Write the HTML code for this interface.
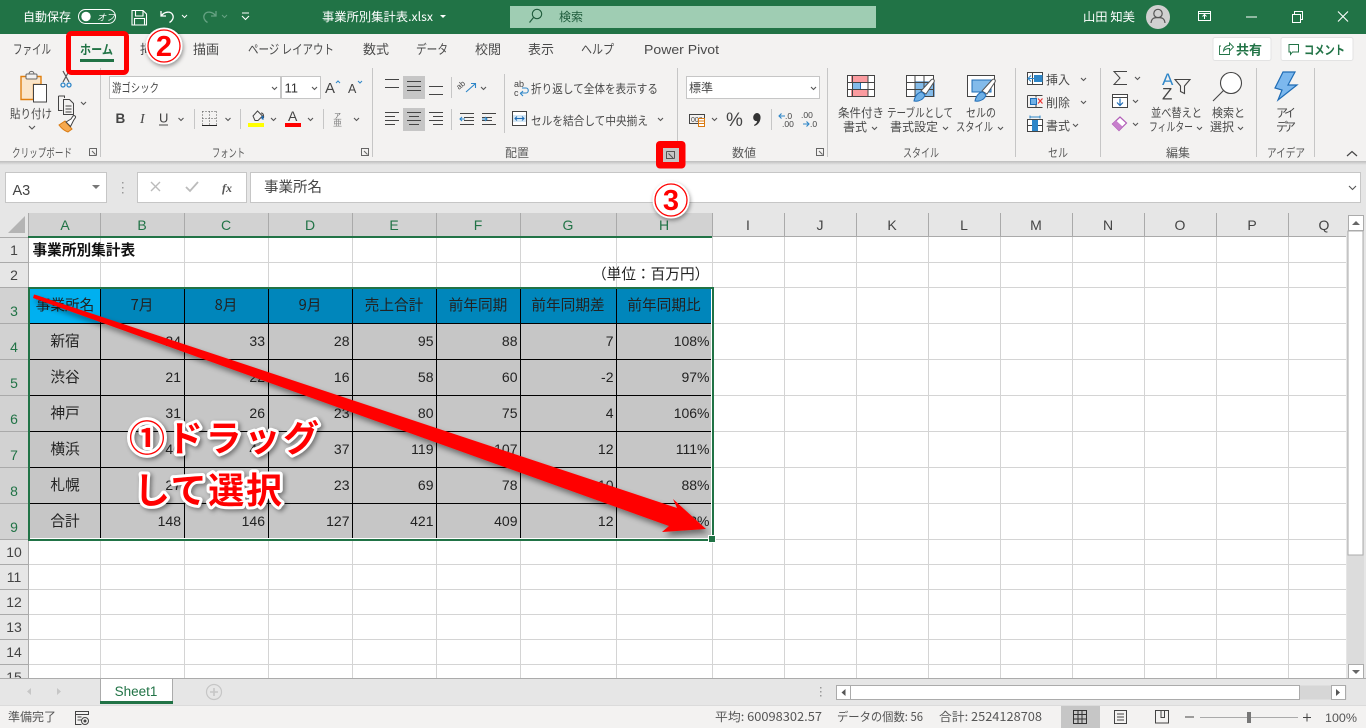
<!DOCTYPE html>
<html lang="ja"><head><meta charset="utf-8"><title>事業所別集計表.xlsx - Excel</title>
<style>
html,body{margin:0;padding:0;width:1366px;height:728px;overflow:hidden;background:#fff}
svg{display:block}
text{font-family:"Liberation Sans","Noto Sans CJK JP",sans-serif}
.j{font-family:"Noto Sans CJK JP","Liberation Sans",sans-serif}
.r{font-size:12px;fill:#4a4a4a;font-family:"Noto Sans CJK JP",sans-serif}
.t{font-size:13px;fill:#4a4a4a;font-family:"Noto Sans CJK JP",sans-serif}
.w{font-size:12px;fill:#fff;font-family:"Noto Sans CJK JP",sans-serif}
.g{font-size:12px;fill:#5a5a5a;font-family:"Noto Sans CJK JP",sans-serif}
.c{font-size:14px;fill:#222;text-anchor:end}
.m{font-size:14.67px;fill:#222;text-anchor:middle;font-family:"Noto Sans CJK JP",sans-serif}
.h{font-size:14px;fill:#444;text-anchor:middle}
.s{fill:#217346}
.i{fill:none;stroke:#444;stroke-width:1}
.ch{fill:none;stroke:#555;stroke-width:1.1}
.big{font-size:36px;font-weight:700;fill:#f00;stroke:#fff;stroke-width:6px;paint-order:stroke;stroke-linejoin:round;font-family:"Noto Sans CJK JP",sans-serif;filter:drop-shadow(2px 2px 2px rgba(0,0,0,.4))}
.num{font-size:29px;font-weight:700;fill:#f00;text-anchor:middle;font-family:"Liberation Sans",sans-serif}
</style></head><body>
<svg width="1366" height="728" viewBox="0 0 1366 728" xmlns="http://www.w3.org/2000/svg">
<defs>
<filter id="sh" x="-10%" y="-10%" width="120%" height="130%"><feDropShadow dx="3" dy="4" stdDeviation="3" flood-color="#000" flood-opacity=".45"/></filter>
<filter id="cs" x="-30%" y="-30%" width="160%" height="160%"><feDropShadow dx="1" dy="2" stdDeviation="2" flood-color="#000" flood-opacity=".4"/></filter>
<linearGradient id="rs" x1="0" y1="0" x2="0" y2="1"><stop offset="0" stop-color="#bdbdbd"/><stop offset="1" stop-color="#e6e6e6"/></linearGradient>
</defs>

<!-- backgrounds -->
<rect width="1366" height="34" fill="#217346"/>
<rect y="34" width="1366" height="127" fill="#f3f2f1"/>
<rect y="161" width="1366" height="52" fill="#e6e6e6"/>
<rect y="161" width="1366" height="4" fill="url(#rs)"/>

<!-- title bar -->
<text class="w" x="23" y="21" textLength="48" lengthAdjust="spacingAndGlyphs">自動保存</text>
<rect x="78.5" y="9.5" width="37" height="14" rx="7" fill="none" stroke="#fff"/>
<circle cx="86" cy="16.5" r="4.7" fill="#fff"/>
<text class="w" x="97" y="20.5" style="font-size:9px;font-style:italic">オフ</text>
<path d="M132 10.5h11l3.500 3.500v11h-14.500zM135.500 10.500v5.500h7.500v-5.500M134.500 25v-6.500h10v6.500" fill="none" stroke="#fff" stroke-width="1.100"/>
<path d="M161 11v5h5M161.500 15.500c3-4 9-4.500 11-1 1.800 3-.3 6.500-3 8" fill="none" stroke="#fff" stroke-width="1.300"/>
<path d="M182 15l2.500 2.500 2.500-2.500" fill="none" stroke="#fff"/>
<path d="M216 11v5h-5M215.500 15.500c-3-4-9-4.500-11-1-1.800 3 .3 6.500 3 8" fill="none" stroke="#66a283" stroke-width="1.300"/>
<path d="M222 15l2.500 2.500 2.500-2.500" fill="none" stroke="#66a283"/>
<path d="M242 13h7M242 16l3.500 3.500 3.500-3.500" fill="none" stroke="#fff" stroke-width="1.100"/>
<text class="w" x="322" y="21" textLength="111" lengthAdjust="spacingAndGlyphs">事業所別集計表.xlsx</text>
<path d="M440 15h6l-3 3z" fill="#fff"/>
<rect x="510" y="6" width="366" height="22" fill="#9fcdb3"/>
<circle cx="537" cy="14" r="4.700" fill="none" stroke="#1f5c3c" stroke-width="1.100"/>
<path d="M533.500 17.500l-4 5" stroke="#1f5c3c" stroke-width="1.200"/>
<text x="559" y="21" class="j" style="font-size:12px;fill:#1f5c3c">検索</text>
<text class="w" x="1083" y="21" textLength="52" lengthAdjust="spacingAndGlyphs">山田 知美</text>
<circle cx="1158" cy="17" r="12" fill="#d0d0d0"/>
<circle cx="1158" cy="13.500" r="4.200" fill="none" stroke="#555" stroke-width="1.200"/>
<path d="M1151 23c.5-5 3.500-5.500 7-5.500s6.500.5 7 5.500" fill="none" stroke="#555" stroke-width="1.200"/>
<path d="M1198.500 11.500h12v9h-12zM1198.500 13.500h12M1204.500 19v-4M1202.500 16.500l2-2 2 2" fill="none" stroke="#fff"/>
<rect x="1246" y="16.500" width="11" height="1" fill="#fff"/>
<path d="M1292.500 14.500h8v8h-8zM1294.500 14v-2.500h8v8h-2" fill="none" stroke="#fff"/>
<path d="M1338 11.500l10 10M1348 11.500l-10 10" stroke="#fff" stroke-width="1.100"/>

<!-- tabs -->
<text class="t" x="13" y="54" textLength="38" lengthAdjust="spacingAndGlyphs">ファイル</text>
<text class="s j" x="80" y="54" style="font-size:12.500px;font-weight:700" textLength="33" lengthAdjust="spacingAndGlyphs">ホーム</text>
<rect x="80" y="59" width="34" height="3" fill="#217346"/>
<text class="t" x="140" y="54">挿入</text>
<text class="t" x="193" y="54">描画</text>
<text class="t" x="248" y="54" textLength="86" lengthAdjust="spacingAndGlyphs">ページ レイアウト</text>
<text class="t" x="363" y="54">数式</text>
<text class="t" x="416" y="54" textLength="32" lengthAdjust="spacingAndGlyphs">データ</text>
<text class="t" x="475" y="54">校閲</text>
<text class="t" x="528" y="54">表示</text>
<text class="t" x="581" y="54" textLength="33" lengthAdjust="spacingAndGlyphs">ヘルプ</text>
<text x="644" y="54" style="font-size:12.500px;fill:#4a4a4a" textLength="75" lengthAdjust="spacingAndGlyphs">Power Pivot</text>
<rect x="1213" y="37.500" width="58" height="23" rx="2" fill="#fff" stroke="#e3e3e3"/>
<path d="M1221 46h-1.500v8.500h10v-3M1223.500 51c.5-4 3-5.500 6-5.500v-2.500l4 4-4 4v-2.500c-2.500 0-4.500 .5-6 2.500z" fill="none" stroke="#217346" stroke-width=".9"/>
<text class="s j" x="1236" y="54.500" style="font-size:13px;font-weight:700">共有</text>
<rect x="1281" y="37.500" width="72" height="23" rx="2" fill="#fff" stroke="#e3e3e3"/>
<path d="M1289 44.500h9.500v7.500h-6l-2 2.500v-2.500h-1.500z" fill="none" stroke="#217346"/>
<text class="s j" x="1304" y="54.500" style="font-size:12.500px;font-weight:700" textLength="41" lengthAdjust="spacingAndGlyphs">コメント</text>

<!-- group separators -->
<g fill="#c6c6c6">
<rect x="100" y="68" width="1" height="89"/><rect x="372" y="68" width="1" height="89"/><rect x="677" y="68" width="1" height="89"/><rect x="827" y="68" width="1" height="89"/><rect x="1015" y="68" width="1" height="89"/><rect x="1100" y="68" width="1" height="89"/><rect x="1256" y="68" width="1" height="89"/><rect x="1314" y="68" width="1" height="89"/>
<rect x="194" y="109" width="1" height="20"/><rect x="240" y="109" width="1" height="20"/><rect x="323" y="109" width="1" height="20"/>
<rect x="451" y="77" width="1" height="21"/><rect x="451" y="109" width="1" height="21"/><rect x="504" y="74" width="1" height="59"/><rect x="771" y="109" width="1" height="21"/>
</g>
<!-- group labels -->
<text class="g" x="12" y="157" textLength="60" lengthAdjust="spacingAndGlyphs">クリップボード</text>
<text class="g" x="212" y="157" textLength="33" lengthAdjust="spacingAndGlyphs">フォント</text>
<text class="g" x="505" y="157">配置</text>
<text class="g" x="732" y="157">数値</text>
<text class="g" x="903" y="157" textLength="36" lengthAdjust="spacingAndGlyphs">スタイル</text>
<text class="g" x="1048" y="157" textLength="20" lengthAdjust="spacingAndGlyphs">セル</text>
<text class="g" x="1166" y="157">編集</text>
<text class="g" x="1267" y="157" textLength="38" lengthAdjust="spacingAndGlyphs">アイデア</text>
<g class="i" style="stroke:#666"><path d="M89.500 148.500h7v7M89.500 148.500v7h7M92 151l3.500 3.500"/><path d="M361.500 148.500h7v7h-7zM364 151l3.500 3.500"/><path d="M816.500 148.500h7v7h-7zM819 151l3.500 3.500"/></g>
<path d="M1347 156l5-4.500 5 4.500" fill="none" stroke="#444" stroke-width="1.200"/>

<!-- clipboard group -->
<path d="M21 76.500h20v8h-7.500v15H21z" fill="#fbe5c8" stroke="#e07f0f" stroke-width="1.400"/>
<rect x="26" y="74" width="11" height="5" rx="1" fill="#f3f2f1" stroke="#666"/>
<path d="M29 74c0-3.500 5-3.500 5 0" fill="none" stroke="#666"/>
<rect x="33.500" y="84.500" width="13" height="17.500" fill="#fff" stroke="#444"/>
<text class="r" x="10" y="118" textLength="42" lengthAdjust="spacingAndGlyphs">貼り付け</text>
<path class="ch" d="M29 126l3 3 3-3"/>
<path d="M63 71l6 11M69 71l-6 11" stroke="#555" stroke-width="1.200"/>
<circle cx="63" cy="85" r="2" fill="none" stroke="#2e86c8" stroke-width="1.300"/><circle cx="69" cy="85" r="2" fill="none" stroke="#2e86c8" stroke-width="1.300"/>
<path d="M58.500 96h6v2M58.500 96v14.500h4M63.500 99.500h6l4 4v11h-10zM65.500 106h6M65.500 109h6M65.500 112h6" fill="none" stroke="#444"/>
<path class="ch" d="M81 102l2.500 2.500 2.500-2.500"/>
<path d="M59 125l6-4 7 8-4 3c-3-1-6-3-9-7z" fill="#f5a94f" stroke="#d97a11"/>
<path d="M66 122l5-3 2-3c1-1 3 0 2.500 1.500l-2 3-3 6z" fill="#fff" stroke="#444"/>

<!-- font group -->
<rect x="109.500" y="76.500" width="171" height="22" fill="#fff" stroke="#c6c6c6"/>
<rect x="281.500" y="76.500" width="39" height="22" fill="#fff" stroke="#c6c6c6"/>
<text class="r" x="112" y="92" textLength="47" lengthAdjust="spacingAndGlyphs">游ゴシック</text>
<path class="ch" d="M272 87l2.500 2.500 2.500-2.500M312 87l2.500 2.500 2.500-2.500"/>
<text x="284.500" y="92.500" style="font-size:13px;fill:#333">11</text>
<text x="325" y="93" style="font-size:15px;fill:#444">A</text>
<path d="M336 83l2-2 2 2" fill="none" stroke="#2e86c8"/>
<text x="348" y="93" style="font-size:12.500px;fill:#444">A</text>
<path d="M358 81l2 2 2-2" fill="none" stroke="#2e86c8"/>
<text x="115.500" y="123" style="font-size:13.500px;font-weight:700;fill:#444">B</text>
<text x="140" y="123" style="font-size:14px;font-style:italic;font-family:'Liberation Serif',serif;fill:#444">I</text>
<text x="159" y="122.500" style="font-size:13px;fill:#444">U</text><rect x="159" y="124.500" width="9" height="1" fill="#444"/>
<path class="ch" d="M178.500 118l2.500 2.500 2.500-2.500"/>
<path d="M202.500 111.500h14M202.500 118.500h14M202.500 111.500v13M209.500 111.500v13M216.500 111.500v13" fill="none" stroke="#555" stroke-dasharray="1 2"/>
<rect x="202" y="125" width="15" height="1" fill="#222"/>
<path class="ch" d="M225.500 118l2.500 2.500 2.500-2.500"/>
<path d="M253 116l4.500-5 5 5-4.500 4.500h-3zM261 113c2 0 3 2 2.500 5" fill="none" stroke="#444"/><path d="M261.500 116l2 0 0 4-2-1z" fill="#1f6cb5"/>
<rect x="248" y="123" width="16" height="4" fill="#ff0"/>
<path class="ch" d="M271 118l2.500 2.500 2.500-2.500"/>
<text x="288" y="121" style="font-size:14px;fill:#444">A</text>
<rect x="285" y="123" width="16" height="4" fill="#f00"/>
<path class="ch" d="M308 118l2.500 2.500 2.500-2.500"/>
<text x="334" y="118" class="j" style="font-size:7px;fill:#666">ア</text>
<text x="333" y="126" class="j" style="font-size:9px;fill:#888">亜</text>
<path class="ch" d="M354 118l2.500 2.500 2.500-2.500"/>

<!-- alignment -->
<rect x="403" y="76" width="22" height="23" fill="#c6c6c6"/>
<rect x="403" y="108" width="22" height="23" fill="#c6c6c6"/>
<g stroke="#444" fill="none">
<path d="M385 79.500h14M385 87.500h14"/><path d="M407 81.500h14M407 86.500h14M407 90.500h14"/><path d="M429 86.500h14M429 94.500h14"/>
<path d="M385 112.500h14M385 116.500h10M385 120.500h14M385 124.500h10"/><path d="M407 112.500h14M409 116.500h10M407 120.500h14M409 124.500h10"/><path d="M429 112.500h14M433 116.500h10M429 120.500h14M433 124.500h10"/>
<path d="M460 113.500h14M464 117.500h10M464 120.500h10M460 124.500h14"/>
<path d="M482 113.500h14M482 117.500h10M482 120.500h10M482 124.500h14"/>
</g>
<path d="M465 119h-5M462 117l-2 2 2 2M482 119h5M485 117l2 2-2 2" fill="none" stroke="#2e86c8" stroke-width="1.100"/>
<text x="459" y="90" style="font-size:8px;fill:#444" transform="rotate(-40 459 90)">ab</text>
<path d="M466 92l9-8M471 83.500h4.500v4.500" fill="none" stroke="#2e86c8" stroke-width="1.100"/>
<path class="ch" d="M481 87l2.500 2.500 2.500-2.500"/>
<text x="514" y="87" style="font-size:9px;fill:#444">ab</text><text x="514" y="96" style="font-size:9px;fill:#444">c</text>
<path d="M520 93h6c3 0 3-5 0-5h-4M523 91l-2.500 2.500 2.500 2.500" fill="none" stroke="#2e86c8" stroke-width="1.100"/>
<text class="r" x="531" y="93" textLength="127" lengthAdjust="spacingAndGlyphs">折り返して全体を表示する</text>
<rect x="512.500" y="111.500" width="14" height="14" fill="#fff" stroke="#444"/>
<rect x="513" y="115" width="13" height="7" fill="#d5e8f6"/>
<path d="M515 118.500h9M517 116.500l-2 2 2 2M522 116.500l2 2-2 2" fill="none" stroke="#1f6cb5"/>
<text class="r" x="531" y="125" textLength="117" lengthAdjust="spacingAndGlyphs">セルを結合して中央揃え</text>
<path class="ch" d="M658 118l2.500 2.500 2.500-2.500"/>

<!-- launcher highlighted -->
<rect x="656" y="141" width="29.500" height="27.500" rx="4" fill="#f00"/>
<rect x="663" y="148" width="16" height="14" fill="#c6c6c6"/>
<path d="M666.500 151.500h8v7M666.500 151.500v7h8M668.500 153.500l4.500 4.500" fill="none" stroke="#555"/>

<!-- number -->
<rect x="686.500" y="76.500" width="133" height="22" fill="#fff" stroke="#c6c6c6"/>
<text class="r" x="689" y="92">標準</text>
<path class="ch" d="M811 87l2.500 2.500 2.500-2.500"/>
<path d="M689.500 114.500h15v9h-15z" fill="none" stroke="#444"/>
<text x="691" y="122" style="font-size:7px;fill:#444">000</text>
<rect x="698.500" y="118.500" width="6" height="8" fill="#fff" stroke="#d97a11"/><path d="M698.500 121h6M698.500 123.500h6" stroke="#d97a11"/>
<path class="ch" d="M712 118l2.500 2.500 2.500-2.500"/>
<text x="726" y="126" style="font-size:19px;fill:#444">%</text>
<path d="M757 113c2 0 4 2 3.500 5.500-.5 4-3 6.500-6 7.500l-.5-1c2-1 3-2.500 3.200-4-2 .5-4-1-4-3.500 0-2.500 2-4.500 3.800-4.500z" fill="#333"/>
<path d="M779 116h6M781.500 113.500l-2.500 2.500 2.500 2.500M803 124h6M806.500 121.500l2.500 2.500-2.500 2.500" fill="none" stroke="#2e86c8" stroke-width="1.100"/>
<text x="785" y="119" style="font-size:8.500px;fill:#444">.0</text><text x="782" y="127" style="font-size:8.500px;fill:#444">.00</text>
<text x="801" y="118" style="font-size:8.500px;fill:#444">.00</text><text x="810" y="127" style="font-size:8.500px;fill:#444">.0</text>

<!-- styles -->
<rect x="847.500" y="75.500" width="27" height="21" fill="#fff"/>
<rect x="852" y="75.500" width="16" height="7" fill="#fb9ca0" stroke="#d81e25"/>
<rect x="852" y="89.500" width="16" height="7" fill="#fb9ca0" stroke="#d81e25"/>
<rect x="852.500" y="82.500" width="8" height="7" fill="#83bbea" stroke="#1f6cb5"/>
<path d="M847.500 75.500h27v21h-27zM847.500 82.500h27M847.500 89.500h27M852.500 75.500v21M868 75.500v21" fill="none" stroke="#444"/>
<text class="r" x="838" y="117" textLength="46" lengthAdjust="spacingAndGlyphs">条件付き</text>
<text class="r" x="843" y="131">書式</text><path class="ch" d="M872 127l2.500 2.500 2.500-2.500"/>
<rect x="906.500" y="75.500" width="27" height="21" fill="#fff"/>
<rect x="915" y="82" width="19" height="14.500" fill="#83bbea" stroke="#1f6cb5"/>
<path d="M906.500 75.500h27v21h-27zM906.500 82.500h27M906.500 89.500h27M915 75.500v21M924 75.500v21" fill="none" stroke="#444"/>
<path d="M921 91l10-11c2-2 4 0 3 2l-8 12z" fill="#fff" stroke="#555"/><path d="M914 101c1-5 4-9 8-9l3 3c-1 4-6 7-11 6z" fill="#6fb0e6" stroke="#1f6cb5"/>
<text class="r" x="887" y="117" textLength="66" lengthAdjust="spacingAndGlyphs">テーブルとして</text>
<text class="r" x="890" y="131">書式設定</text><path class="ch" d="M943 127l2.500 2.500 2.500-2.500"/>
<rect x="967.500" y="75.500" width="27" height="21" fill="#fff"/>
<rect x="972" y="80" width="19" height="12" fill="#83bbea" stroke="#1f6cb5"/>
<path d="M967.500 75.500h27v21h-27z" fill="none" stroke="#444"/>
<path d="M982 91l10-11c2-2 4 0 3 2l-8 12z" fill="#fff" stroke="#555"/><path d="M975 101c1-5 4-9 8-9l3 3c-1 4-6 7-11 6z" fill="#6fb0e6" stroke="#1f6cb5"/>
<text class="r" x="966" y="117" textLength="30" lengthAdjust="spacingAndGlyphs">セルの</text>
<text class="r" x="956" y="131" textLength="37" lengthAdjust="spacingAndGlyphs">スタイル</text><path class="ch" d="M998 127l2.500 2.500 2.500-2.500"/>

<!-- cells -->
<path d="M1027.500 72.500h15v12h-15zM1027.500 78.500h15M1032.500 72.500v12" fill="#fff" stroke="#444"/>
<rect x="1034" y="75" width="8.500" height="7" fill="#2e86c8"/><path d="M1036 78.500h-8M1031 75.500l-3 3 3 3" fill="none" stroke="#2e86c8" stroke-width="1.100"/>
<text class="r" x="1046" y="84">挿入</text><path class="ch" d="M1081 78l2.500 2.500 2.500-2.500"/>
<path d="M1027.500 95.500h15M1027.500 107.500h15M1027.500 95.500v12M1036 95.500v2M1036 105v2.500" fill="none" stroke="#444"/>
<rect x="1030.500" y="98.500" width="6" height="6" fill="#6fb0e6" stroke="#1f6cb5"/><path d="M1038 98.500l4.500 5M1042.500 98.500l-4.500 5" stroke="#e33" stroke-width="1.200"/>
<text class="r" x="1046" y="107">削除</text><path class="ch" d="M1081 101l2.500 2.500 2.500-2.500"/>
<path d="M1027.500 119.500h15v12h-15zM1027.500 125.500h15M1032.500 119.500v12" fill="#fff" stroke="#444"/>
<rect x="1032" y="120" width="6" height="11" fill="#2e86c8"/>
<path d="M1030 117h10M1030 115.500v3M1040 115.500v3" stroke="#2e86c8"/>
<text class="r" x="1046" y="130">書式</text><path class="ch" d="M1073 124l2.500 2.500 2.500-2.500"/>

<!-- editing -->
<path d="M1127 71.500h-13l6 6.500-6 6.500h13" fill="none" stroke="#444"/>
<path class="ch" d="M1135 77l2.500 2.500 2.500-2.500"/>
<rect x="1112.500" y="94.500" width="15" height="13" fill="#fff" stroke="#444"/><path d="M1112.500 97.500h15" stroke="#444"/>
<path d="M1120 98.500v7M1117 102.500l3 3 3-3" fill="none" stroke="#1f6cb5" stroke-width="1.200"/>
<path class="ch" d="M1133 100l2.500 2.500 2.500-2.500"/>
<path d="M1112.500 124l7.500-7 6.500 6-7.500 7.500z" fill="#fff" stroke="#b25fb8" stroke-width="1.200"/><path d="M1112.500 124l3.500-3.500 6.500 6-3.500 4z" fill="#c77fcc"/>
<path class="ch" d="M1133 123l2.500 2.500 2.500-2.500"/>
<text x="1162" y="85" style="font-size:17px;fill:#2e86c8">A</text><text x="1162" y="99.500" style="font-size:17px;fill:#444">Z</text>
<path d="M1175 79.500h15l-5.500 6.500v7.500l-4-2v-5.500z" fill="none" stroke="#444" stroke-width="1.100"/>
<text class="r" x="1151" y="117" textLength="51" lengthAdjust="spacingAndGlyphs">並べ替えと</text>
<text class="r" x="1149" y="131" textLength="44" lengthAdjust="spacingAndGlyphs">フィルター</text><path class="ch" d="M1197 127l2.500 2.500 2.500-2.500"/>
<circle cx="1231" cy="83" r="10.500" fill="#fff" stroke="#444" stroke-width="1.100"/>
<path d="M1223.500 90.500l-10.500 10.500" stroke="#444" stroke-width="1.100"/>
<text class="r" x="1212" y="117" textLength="33" lengthAdjust="spacingAndGlyphs">検索と</text>
<text class="r" x="1210" y="131">選択</text><path class="ch" d="M1238 127l2.500 2.500 2.500-2.500"/>

<!-- ideas -->
<path d="M1283 72h12l-7 13h9l-19 15 4-10-7-2z" fill="#7cb8ee" stroke="#1f6cb5" stroke-width="1.200"/>
<text class="r" x="1276" y="117" textLength="20">アイ</text>
<text class="r" x="1276" y="131" textLength="20">デア</text>

<!-- formula bar -->
<rect x="5.500" y="172.500" width="101" height="30" fill="#fff" stroke="#c6c6c6"/>
<text x="12.500" y="195" style="font-size:14.500px;fill:#444">A3</text>
<path d="M92 185h8l-4 4z" fill="#777"/>
<path d="M122 182h1.500v1.500H122zM122 187h1.500v1.500H122zM122 192h1.500v1.500H122z" fill="#999"/>
<rect x="137.500" y="172.500" width="109" height="30" fill="#fff" stroke="#c6c6c6"/>
<path d="M151 182l9 9M160 182l-9 9" stroke="#bbb" stroke-width="1.400"/>
<path d="M186 187l4 4 8-9" fill="none" stroke="#bbb" stroke-width="1.800"/>
<text x="222" y="192" style="font-size:12px;font-style:italic;font-weight:700;fill:#555;font-family:'Liberation Serif',serif">fx</text>
<rect x="250.500" y="172.500" width="1110" height="30" fill="#fff" stroke="#c6c6c6"/>
<text class="j" x="264" y="192" style="font-size:14.500px;fill:#444">事業所名</text>
<path class="ch" d="M1349 186l3.500 3.500 3.500-3.500"/>

<!-- sheet area -->
<rect x="0" y="213" width="1346" height="466" fill="#fff"/>
<rect x="0" y="213" width="1346" height="24" fill="#e6e6e6"/>
<rect x="0" y="237" width="28" height="442" fill="#e6e6e6"/>
<rect x="28" y="213" width="684" height="24" fill="#d2d2d2"/>
<rect x="0" y="287" width="28" height="252" fill="#d2d2d2"/>
<path d="M25 216v17H8z" fill="#b4b4b4"/>
<!-- grid -->
<g stroke="#d4d4d4" fill="none">
<path d="M100.500 237V679M184.500 237V679M268.500 237V679M352.500 237V679M436.500 237V679M520.500 237V679M616.500 237V679M712.500 237V679M784.500 237V679M856.500 237V679M928.500 237V679M1000.500 237V679M1072.500 237V679M1144.500 237V679M1216.500 237V679M1288.500 237V679"/>
<path d="M28 262.500H1346M28 287.500H1346M28 323.500H1346M28 359.500H1346M28 395.500H1346M28 431.500H1346M28 467.500H1346M28 503.500H1346M28 539.500H1346M28 564.500H1346M28 589.500H1346M28 614.500H1346M28 639.500H1346M28 664.500H1346"/>
</g>
<g stroke="#aaa" fill="none">
<path d="M100.500 213V237M184.500 213V237M268.500 213V237M352.500 213V237M436.500 213V237M520.500 213V237M616.500 213V237M712.500 213V237M784.500 213V237M856.500 213V237M928.500 213V237M1000.500 213V237M1072.500 213V237M1144.500 213V237M1216.500 213V237M1288.500 213V237"/>
<path d="M0 262.500H28M0 287.500H28M0 323.500H28M0 359.500H28M0 395.500H28M0 431.500H28M0 467.500H28M0 503.500H28M0 539.500H28M0 564.500H28M0 589.500H28M0 614.500H28M0 639.500H28M0 664.500H28"/>
<path d="M28.500 213V679M0 237.500H28M712 236.500H1346"/>
</g>
<rect x="28" y="236" width="684" height="2" fill="#217346"/>
<!-- selection fills -->
<rect x="29" y="288" width="683" height="35" fill="#0086bb"/>
<rect x="30" y="289" width="70" height="34" fill="#00b0f0"/>
<rect x="30" y="324" width="682" height="215" fill="#c6c6c6"/>
<g stroke="#000" fill="none">
<path d="M100.500 289V539M184.500 289V539M268.500 289V539M352.500 289V539M436.500 289V539M520.500 289V539M616.500 289V539"/>
<path d="M30 323.500H711M30 359.500H711M30 395.500H711M30 431.500H711M30 467.500H711M30 503.500H711"/>
</g>
<path d="M711.500 289V538M30 538.500H711" stroke="#fff" fill="none"/>
<rect x="28" y="287" width="686" height="2" fill="#217346"/>
<rect x="28" y="287" width="2" height="254" fill="#217346"/>
<rect x="712" y="287" width="2" height="254" fill="#217346"/>
<rect x="28" y="539" width="686" height="2" fill="#217346"/>
<rect x="708.500" y="535.500" width="7" height="7" fill="#217346" stroke="#fff"/>

<!-- col headers -->
<g class="h">
<text class="h s" x="65" y="230" style="fill:#217346">A</text><text class="h" x="142" y="230" style="fill:#217346">B</text><text class="h" x="226" y="230" style="fill:#217346">C</text><text class="h" x="310" y="230" style="fill:#217346">D</text><text class="h" x="394" y="230" style="fill:#217346">E</text><text class="h" x="478" y="230" style="fill:#217346">F</text><text class="h" x="568" y="230" style="fill:#217346">G</text><text class="h" x="664" y="230" style="fill:#217346">H</text>
<text class="h" x="748" y="230">I</text><text class="h" x="820" y="230">J</text><text class="h" x="892" y="230">K</text><text class="h" x="964" y="230">L</text><text class="h" x="1036" y="230">M</text><text class="h" x="1108" y="230">N</text><text class="h" x="1180" y="230">O</text><text class="h" x="1252" y="230">P</text><text class="h" x="1324" y="230">Q</text>
</g>
<!-- row headers -->
<text class="h" x="14" y="255">1</text><text class="h" x="14" y="280">2</text>
<text class="h" x="14" y="316" style="fill:#217346">3</text><text class="h" x="14" y="352" style="fill:#217346">4</text><text class="h" x="14" y="388" style="fill:#217346">5</text><text class="h" x="14" y="424" style="fill:#217346">6</text><text class="h" x="14" y="460" style="fill:#217346">7</text><text class="h" x="14" y="496" style="fill:#217346">8</text><text class="h" x="14" y="532" style="fill:#217346">9</text>
<text class="h" x="14" y="557">10</text><text class="h" x="14" y="582">11</text><text class="h" x="14" y="607">12</text><text class="h" x="14" y="632">13</text><text class="h" x="14" y="657">14</text><text class="h" x="14" y="682">15</text>

<!-- cell text -->
<text class="j" x="32.500" y="255" style="font-size:14.670px;font-weight:700;fill:#111">事業所別集計表</text>
<text class="j" x="592" y="279" style="font-size:14.670px;fill:#222">（単位：百万円）</text>
<text class="m" x="65" y="310">事業所名</text><text class="m" x="142" y="310">7月</text><text class="m" x="226" y="310">8月</text><text class="m" x="310" y="310">9月</text><text class="m" x="394" y="310">売上合計</text><text class="m" x="478" y="310">前年同期</text><text class="m" x="568" y="310">前年同期差</text><text class="m" x="664" y="310">前年同期比</text>
<text class="m" x="65" y="346">新宿</text><text class="m" x="65" y="382">渋谷</text><text class="m" x="65" y="418">神戸</text><text class="m" x="65" y="454">横浜</text><text class="m" x="65" y="490">札幌</text><text class="m" x="65" y="526">合計</text>
<g>
<text class="c" x="181" y="346">24</text><text class="c" x="265" y="346">33</text><text class="c" x="349.500" y="346">28</text><text class="c" x="433.500" y="346">95</text><text class="c" x="517.500" y="346">88</text><text class="c" x="613.500" y="346">7</text><text class="c" x="709.500" y="346">108%</text>
<text class="c" x="181" y="382">21</text><text class="c" x="265" y="382">22</text><text class="c" x="349.500" y="382">16</text><text class="c" x="433.500" y="382">58</text><text class="c" x="517.500" y="382">60</text><text class="c" x="613.500" y="382">-2</text><text class="c" x="709.500" y="382">97%</text>
<text class="c" x="181" y="418">31</text><text class="c" x="265" y="418">26</text><text class="c" x="349.500" y="418">23</text><text class="c" x="433.500" y="418">80</text><text class="c" x="517.500" y="418">75</text><text class="c" x="613.500" y="418">4</text><text class="c" x="709.500" y="418">106%</text>
<text class="c" x="181" y="454">40</text><text class="c" x="265" y="454">42</text><text class="c" x="349.500" y="454">37</text><text class="c" x="433.500" y="454">119</text><text class="c" x="517.500" y="454">107</text><text class="c" x="613.500" y="454">12</text><text class="c" x="709.500" y="454">111%</text>
<text class="c" x="181" y="490">27</text><text class="c" x="265" y="490">19</text><text class="c" x="349.500" y="490">23</text><text class="c" x="433.500" y="490">69</text><text class="c" x="517.500" y="490">78</text><text class="c" x="613.500" y="490">-10</text><text class="c" x="709.500" y="490">88%</text>
<text class="c" x="181" y="526">148</text><text class="c" x="265" y="526">146</text><text class="c" x="349.500" y="526">127</text><text class="c" x="433.500" y="526">421</text><text class="c" x="517.500" y="526">409</text><text class="c" x="613.500" y="526">12</text><text class="c" x="709.500" y="526">103%</text>
</g>

<!-- vertical scrollbar -->
<rect x="1346" y="213" width="20" height="466" fill="#e6e6e6"/>
<rect x="1347" y="231" width="17" height="433" fill="#dcdcdc"/>
<rect x="1348" y="231" width="15" height="324" fill="#fff" stroke="#ababab"/>
<rect x="1348.500" y="215.500" width="15" height="15" fill="#fff" stroke="#ababab"/>
<path d="M1352 225l4-4 4 4z" fill="#666"/>
<rect x="1348.500" y="664.500" width="15" height="14.500" fill="#fff" stroke="#ababab"/>
<path d="M1352 670h8l-4 4z" fill="#666"/>

<!-- sheet tabs -->
<rect y="678" width="1366" height="28" fill="#e6e6e6"/>
<rect y="678" width="1366" height="1" fill="#ababab"/>
<rect y="705.500" width="1366" height="1" fill="#d0d0d0"/>
<rect x="100.500" y="678.500" width="72" height="24" fill="#fff" stroke="#ababab"/>
<rect x="100" y="701" width="73" height="3" fill="#217346"/>
<text x="136" y="696" text-anchor="middle" style="font-size:13.500px;fill:#217346">Sheet1</text>
<path d="M31 688v7l-4-3.500zM57 688v7l4-3.500z" fill="#c6c6c6"/>
<circle cx="214" cy="692" r="7.500" fill="none" stroke="#c6c6c6" stroke-width="1.200"/>
<path d="M214 688v8M210 692h8" stroke="#c6c6c6" stroke-width="1.600"/>
<path d="M820 687h1.500v1.500H820zM820 691h1.500v1.500H820zM820 695h1.500v1.500H820z" fill="#999"/>
<rect x="836.500" y="685.500" width="510" height="14" fill="#d6d6d6" stroke="#ababab" stroke-width="0"/>
<rect x="836.500" y="685.500" width="14" height="14" fill="#fff" stroke="#ababab"/>
<rect x="850.500" y="685.500" width="449" height="14" fill="#fff" stroke="#ababab"/>
<rect x="1331.500" y="685.500" width="14" height="14" fill="#fff" stroke="#ababab"/>
<path d="M845.500 689v7l-4-3.500zM1336 689v7l4-3.500z" fill="#555"/>

<!-- status bar -->
<rect y="706" width="1366" height="22" fill="#f3f2f1"/>
<text class="j" x="8" y="721" style="font-size:12px;fill:#555">準備完了</text>
<path d="M75.500 711.500h13v3h-13zM75.500 714.500v10h6M77.500 717h4M77.500 720h4" fill="none" stroke="#444"/>
<circle cx="85" cy="721" r="3.500" fill="none" stroke="#444"/><circle cx="85" cy="721" r="1.500" fill="#444"/>
<text class="j" x="715" y="721" style="font-size:12px;fill:#555" textLength="107" lengthAdjust="spacingAndGlyphs">平均: 60098302.57</text>
<text class="j" x="837" y="721" style="font-size:12px;fill:#555" textLength="86" lengthAdjust="spacingAndGlyphs">データの個数: 56</text>
<text class="j" x="939" y="721" style="font-size:12px;fill:#555" textLength="103" lengthAdjust="spacingAndGlyphs">合計: 2524128708</text>
<rect x="1061" y="706" width="39" height="22" fill="#c6c6c6"/>
<path d="M1073.500 710.500h13v13h-13zM1073.500 714.500h13M1073.500 719h13M1078 710.500v13M1082 710.500v13" fill="none" stroke="#333"/>
<path d="M1114.500 710.500h12v13h-12zM1117 714h7M1117 717h7M1117 720h7" fill="none" stroke="#444"/>
<path d="M1155.500 710.500h13v12.500h-13zM1161 710.500v7h3.500v-7" fill="none" stroke="#444"/>
<rect x="1185" y="716.500" width="9" height="1" fill="#444"/>
<rect x="1200" y="717" width="98" height="1" fill="#aaa"/>
<rect x="1247" y="712" width="4" height="11" fill="#777"/>
<path d="M1303 717.500h8M1307 713.500v8" stroke="#444"/>
<text x="1325" y="722" style="font-size:12px;fill:#555" textLength="32" lengthAdjust="spacingAndGlyphs">100%</text>

<!-- annotations -->
<polygon points="34,294.500 36,295 677,508 673,499 706,529 662,532 669,526 33,298" fill="#f00" filter="url(#sh)"/>
<text class="big" x="129" y="451">①</text>
<text class="big" x="167" y="451" textLength="152">ドラッグ</text>
<text class="big" x="134" y="503" textLength="148">して選択</text>
<rect x="68.500" y="33.500" width="58" height="39" rx="3" fill="none" stroke="#f00" stroke-width="5"/>
<circle cx="164" cy="46" r="18.500" fill="#fff" filter="url(#cs)"/>
<circle cx="164" cy="46" r="16" fill="rgba(255,255,255,.8)" stroke="#f00" stroke-width="1.300"/>
<text class="num" x="164" y="56">2</text>
<circle cx="671" cy="200" r="18.500" fill="#fff" filter="url(#cs)"/>
<circle cx="671" cy="200" r="16" fill="rgba(255,255,255,.8)" stroke="#f00" stroke-width="1.300"/>
<text class="num" x="671" y="210">3</text>
</svg>
</body></html>
